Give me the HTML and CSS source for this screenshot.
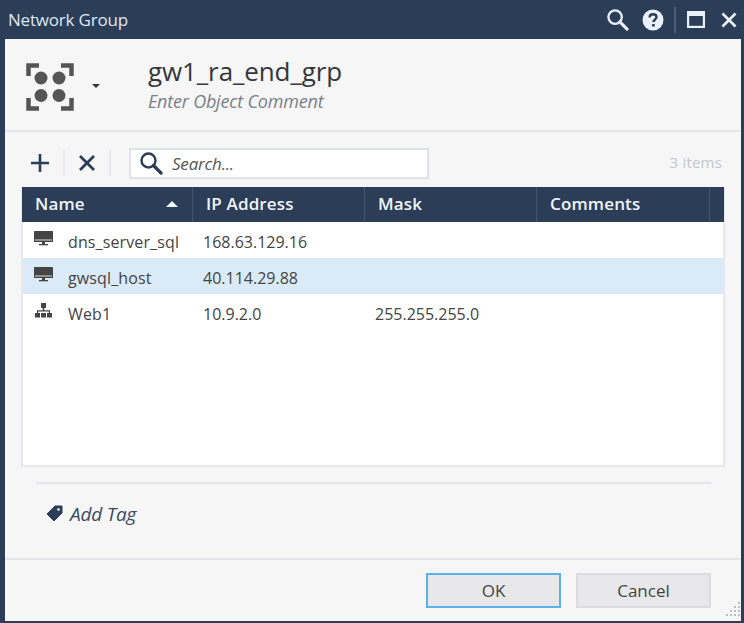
FILE: index.html
```html
<!DOCTYPE html>
<html lang="en">
<head>
<meta charset="utf-8">
<title>Network Group</title>
<link rel="stylesheet" href="styles.css">
</head>
<body>
<div class="window">
  <header class="titlebar">
    <span class="title">Network Group</span>
    <div class="win-icons">
      <svg class="wi" width="23" height="23" viewBox="0 0 24 24"><circle cx="9.500" cy="9.500" r="7" fill="none" stroke="#eaf1fa" stroke-width="2.400"/><path d="M14.500 14.500L22 22" stroke="#eaf1fa" stroke-width="3.200" stroke-linecap="round"/></svg>
      <svg class="wi help" width="22" height="22" viewBox="0 0 22 22"><circle cx="11" cy="11" r="10.500" fill="#eaf1fa"/><path d="M7.600 8.400c0-2 1.500-3.200 3.500-3.200s3.400 1.100 3.400 2.900c0 2.600-3.100 2.600-3.100 5" fill="none" stroke="#2b3d57" stroke-width="2.400"/><rect x="10.100" y="15" width="2.600" height="2.600" fill="#2b3d57"/></svg>
      <span class="win-sep"></span>
      <svg class="wi max" width="18" height="17" viewBox="0 0 18 17"><rect x="1.100" y="1.500" width="15.800" height="14.400" fill="none" stroke="#eaf1fa" stroke-width="2.200"/><rect x="0" y="0" width="18" height="5" fill="#eaf1fa"/></svg>
      <svg class="wi close" width="16" height="16" viewBox="0 0 16 16"><path d="M1.500 1.500L14.500 14.500M14.500 1.500L1.500 14.500" stroke="#eaf1fa" stroke-width="2.600"/></svg>
    </div>
  </header>
  <main class="client">
    <section class="head">
      <div class="obj-icon">
        <svg width="48" height="48" viewBox="0 0 48 48">
          <path d="M13 2.500H2.500V13M35 2.500H45.500V13M13 45.500H2.500V35M35 45.500H45.500V35" fill="none" stroke="#555" stroke-width="4.500"/>
          <circle cx="15" cy="15" r="6.500" fill="#555"/><circle cx="33" cy="15" r="6.500" fill="#555"/>
          <circle cx="15" cy="32.500" r="6.500" fill="#555"/><circle cx="33" cy="32.500" r="6.500" fill="#555"/>
        </svg>
        <span class="caret"></span>
      </div>
      <div class="obj-text">
        <div class="obj-name">gw1_ra_end_grp</div>
        <div class="obj-comment">Enter Object Comment</div>
      </div>
    </section>
    <section class="toolbar">
      <button class="tool tool-add" aria-label="Add"><svg width="20" height="20" viewBox="0 0 20 20"><path d="M10 1V19M1 10H19" stroke="#2b3d57" stroke-width="2.600"/></svg></button>
      <span class="tool-sep"></span>
      <button class="tool" aria-label="Remove"><svg width="18" height="18" viewBox="0 0 18 18"><path d="M2 2L16 16M16 2L2 16" stroke="#2b3d57" stroke-width="2.800"/></svg></button>
      <span class="tool-sep"></span>
      <div class="search">
        <svg width="24" height="24" viewBox="0 0 24 24"><circle cx="9.500" cy="9.500" r="7" fill="none" stroke="#2b3d57" stroke-width="2.400"/><path d="M14.500 14.500L22 22" stroke="#2b3d57" stroke-width="3.200" stroke-linecap="round"/></svg>
        <span>Search...</span>
      </div>
      <span class="count">3 items</span>
    </section>
    <section class="table">
      <div class="thead">
        <div class="th th-name">Name<span class="sort"></span></div>
        <div class="th">IP Address</div>
        <div class="th">Mask</div>
        <div class="th">Comments</div>
        <div class="th th-end"></div>
      </div>
      <div class="row">
        <div class="cell cell-name"><svg class="ri" width="19" height="15" viewBox="0 0 19 15"><use href="#monitor"/></svg>dns_server_sql</div>
        <div class="cell">168.63.129.16</div><div class="cell"></div><div class="cell"></div>
      </div>
      <div class="row selected">
        <div class="cell cell-name"><svg class="ri" width="19" height="15" viewBox="0 0 19 15"><use href="#monitor"/></svg>gwsql_host</div>
        <div class="cell">40.114.29.88</div><div class="cell"></div><div class="cell"></div>
      </div>
      <div class="row">
        <div class="cell cell-name"><svg class="ri" width="19" height="15" viewBox="0 0 19 15"><path d="M7 0H12V5H7ZM8.700 5H10.300V8H8.700ZM3 7.200H16V10H14.800V8.500H4.200V10H3ZM1 10H6V14.500H1ZM7 10H12V14.500H7ZM13 10H18V14.500H13Z" fill="#444"/></svg>Web1</div>
        <div class="cell">10.9.2.0</div><div class="cell">255.255.255.0</div><div class="cell"></div>
      </div>
    </section>
    <section class="tags">
      <div class="tag-inner">
        <svg width="17" height="17" viewBox="0 0 17 17"><path d="M9 1H16V8L8 16L1 9Z" fill="#2b3d57" stroke="#2b3d57" stroke-linejoin="round"/><circle cx="12.500" cy="4.500" r="1.300" fill="#f6f6f7"/></svg>
        <span>Add Tag</span>
      </div>
    </section>
    <footer class="footer">
      <button class="btn btn-primary">OK</button>
      <button class="btn">Cancel</button>
      <svg class="grip" width="16" height="20" viewBox="0 0 16 20"><path d="M13 1h2v2h-2zM13 5h2v2h-2zM9 5h2v2H9zM13 9h2v2h-2zM9 9h2v2H9zM5 9h2v2H5zM13 13h2v2h-2zM9 13h2v2H9zM5 13h2v2H5zM1 13h2v2H1z" fill="#b9bcc4"/></svg>
    </footer>
  </main>
</div>
<svg class="defs" width="0" height="0"><defs><g id="monitor"><rect x="0" y="0" width="19" height="11" rx="0.500" fill="#444"/><rect x="1" y="8.500" width="17" height="1" fill="#ddd"/><rect x="8" y="11" width="3" height="2" fill="#444"/><rect x="5" y="13" width="9" height="1.300" fill="#444"/></g></defs></svg>
</body>
</html>
```
FILE: styles.css
```css
* { box-sizing: border-box; }
html, body { margin: 0; padding: 0; height: 100%; overflow: hidden; }
body { font-family: "Open Sans", "Noto Sans", sans-serif; background: #2b3d57; color: #3a3a3a; }
button { font-family: inherit; }
.window { width: 744px; height: 623px; display: flex; flex-direction: column; padding: 0 3px 2px 5px; background: #2b3d57; }
.titlebar { height: 39px; flex: none; display: flex; align-items: center; justify-content: space-between; margin-left: -5px; margin-right: -3px; padding: 0 7px 0 8px; }
.title { color: #dfe8f2; font-size: 17px; letter-spacing: -0.2px; }
.win-icons { display: flex; align-items: center; }
.wi { display: block; }
.help { margin-left: 13px; }
.win-sep { width: 2px; height: 26px; background: #4f5f77; margin: 0 11px 0 10px; }
.close { margin-left: 16px; }
.client { position: relative; flex: 1; display: flex; flex-direction: column; background: #f6f6f7; min-height: 0; }
.head { height: 93px; flex: none; display: flex; border-bottom: 2px solid #e6e7ec; padding: 24px 0 0 21px; }
.obj-icon { width: 122px; display: flex; align-items: flex-start; }
.caret { margin: 21px 0 0 18px; border-left: 4px solid transparent; border-right: 4px solid transparent; border-top: 4px solid #333; }
.obj-text { margin-top: -11px; }
.obj-name { font-size: 26px; line-height: 38px; color: #34363a; letter-spacing: -0.1px; }
.obj-comment { font-size: 18px; line-height: 24px; margin-top: -1px; font-style: italic; color: #7b7f88; letter-spacing: -0.2px; }
.toolbar { height: 55px; flex: none; display: flex; align-items: center; padding: 7px 19px 0 25px; }
.tool { border: 0; background: none; padding: 0; display: flex; align-items: center; justify-content: center; }
.tool-add { width: 20px; }
.tool-sep { width: 2px; height: 26px; background: #e6e7ec; margin: 0 13px 0 13px; }
.search { width: 300px; height: 31px; background: #fff; border: 2px solid #dfe2e8; display: flex; align-items: center; padding-left: 8px; gap: 9px; font-style: italic; font-size: 17px; color: #555; letter-spacing: -0.2px; margin-left: 5px; }
.count { margin: 0 0 3px auto; font-size: 15px; color: #c4c6d0; letter-spacing: 0.2px; }
.table { margin: 0 16px 0 16px; height: 280px; flex: none; background: #fff; border: 2px solid #e6e8ee; border-top: 0; }
.thead { height: 35px; background: #2b3d57; display: grid; grid-template-columns: 171px 172px 172px 173px 15px; margin: 0 -1px 0 -1px; }
.th { position: relative; color: #f1f5fa; font-weight: 600; font-size: 17px; line-height: 34px; padding-left: 13px; border-right: 1px solid #43536d; letter-spacing: 0.15px; }
.th-end { border-right: 0; padding: 0; }
.sort { position: absolute; left: 144px; top: 14px; border-left: 6px solid transparent; border-right: 6px solid transparent; border-bottom: 6px solid #f1f5fa; }
.row { height: 36px; display: grid; grid-template-columns: 171px 172px 172px 172px; align-items: center; font-size: 16px; color: #444; }
.row.selected { background: #daeaf6; }
.cell { padding: 4px 0 0 9px; white-space: nowrap; }
.cell-name { display: flex; align-items: center; padding-left: 11px; gap: 15px; letter-spacing: 0.12px; }
.ri { flex: none; margin-top: -8px; }
.tags { height: 91px; flex: none; padding: 0 30px 0 31px; }
.tag-inner { margin-top: 15px; height: 76px; border-top: 2px solid #e6e7ec; display: flex; align-items: center; padding: 0 0 15px 10px; gap: 7px; font-size: 19px; font-style: italic; color: #3b4a60; letter-spacing: -0.2px; }
.footer { flex: 1; border-top: 2px solid #e6e7ec; display: flex; justify-content: flex-end; gap: 15px; padding: 13px 30px 0 0; }
.btn { width: 135px; height: 35px; background: #e8e8ea; border: 2px solid #dcdcde; color: #444; font-size: 17px; padding: 0 0 1px; }
.btn-primary { border: 2px solid #5ab2ea; }
.grip { position: absolute; right: 0; bottom: 0; }
.defs { position: absolute; }
```
